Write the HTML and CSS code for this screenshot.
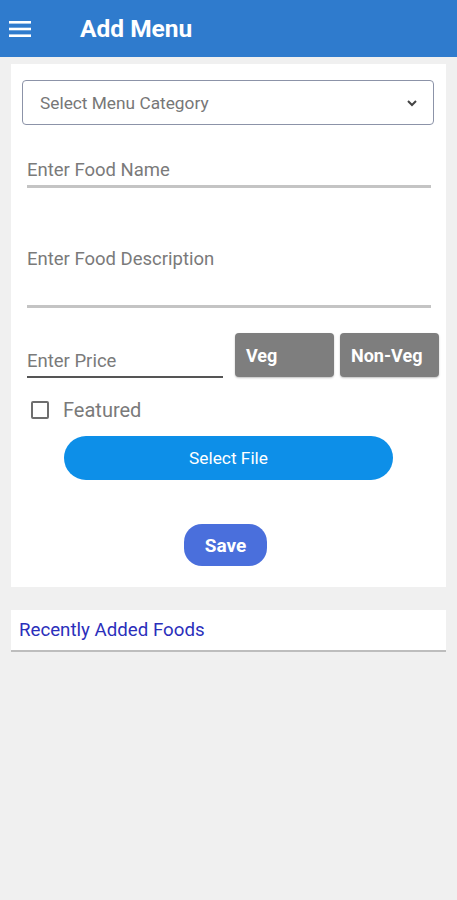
FILE: index.html
```html
<!DOCTYPE html>
<html lang="en">
<head>
    <meta charset="UTF-8">
    <meta name="viewport" content="width=device-width, initial-scale=1.0">
    <title>Add Menu</title>
    <link rel="stylesheet" href="styles.css">
</head>
<body>
    <div class="appbar">
        <svg class="menu-icon" width="22" height="16" viewBox="0 0 22 16">
            <rect x="0" y="0" width="22" height="2.6" fill="#fff"/>
            <rect x="0" y="6.7" width="22" height="2.6" fill="#fff"/>
            <rect x="0" y="13.4" width="22" height="2.6" fill="#fff"/>
        </svg>
        <h1>Add Menu</h1>
    </div>

    <div class="card">
        <div class="select-box">
            <span>Select Menu Category</span>
            <svg width="12" height="8" viewBox="0 0 12 8"><path d="M2 2 L6 6 L10 2" stroke="#444" stroke-width="2" fill="none"/></svg>
        </div>

        <div class="field name-field">Enter Food Name</div>
        <div class="field desc-field">Enter Food Description</div>

        <div class="price-row">
            <div class="field price-field">Enter Price</div>
            <div class="tag-btn veg">Veg</div>
            <div class="tag-btn">Non-Veg</div>
        </div>

        <label class="check-row">
            <span class="check-box"></span>
            <span>Featured</span>
        </label>

        <div class="file-btn">Select File</div>
        <div class="save-row"><div class="save-btn">Save</div></div>
    </div>

    <div class="recent">Recently Added Foods</div>
</body>
</html>
```

FILE: styles.css
```css
body { margin: 0; background: #f0f0f0; font-family: Roboto, "Liberation Sans", sans-serif; }
.appbar { height: 57px; background: #2f7bcd; display: flex; align-items: center; padding-left: 9px; }
.appbar .menu-icon { display: block; }
.appbar h1 { margin: 0 0 0 49px; color: #fff; font-size: 24.5px; font-weight: bold; }
.card { background: #fff; margin: 7px 11px 0 11px; padding: 16px 12px 21px 11px; }
.select-box { height: 43px; border: 1px solid #8c93a8; border-radius: 4px; display: flex; align-items: center; justify-content: space-between; padding: 0 15px 0 17px; color: #777; font-size: 17.3px; }
.field { color: #7a7a7a; font-size: 18.5px; margin-left: 5px; margin-right: 3px; }
.name-field { margin-top: 34px; padding-bottom: 4px; border-bottom: 3px solid #c4c4c4; }
.desc-field { margin-top: 60px; padding-bottom: 35px; border-bottom: 3px solid #c4c4c4; }
.price-row { display: flex; align-items: flex-end; margin-top: 25px; }
.price-field { width: 196px; flex-shrink: 0; margin-right: 0; padding-bottom: 4px; border-bottom: 2px solid #555; }
.tag-btn { flex-shrink: 0; height: 44px; box-sizing: border-box; background: #7e7e7e; color: #fff; font-weight: bold; font-size: 18px; border-radius: 4px; display: flex; align-items: center; padding: 0 11px; margin-left: 6px; margin-bottom: 1px; width: 99px; box-shadow: 0 1px 2px rgba(0,0,0,0.25); }
.tag-btn.veg { margin-left: 12px; }
.check-row { display: flex; align-items: center; margin-top: 20px; margin-left: 9px; color: #7a7a7a; font-size: 20px; }
.check-box { width: 14px; height: 14px; border: 2px solid #6e6e6e; border-radius: 2px; margin-right: 14px; }
.file-btn { margin: 14px 41px 0 42px; height: 44px; background: #0d8fe8; border-radius: 22px; color: #fff; font-size: 17.3px; display: flex; align-items: center; justify-content: center; }
.save-row { display: flex; justify-content: center; margin-top: 44px; padding-right: 5px; }
.save-btn { width: 83px; height: 42px; background: #4a6fdc; border-radius: 18px; color: #fff; font-weight: bold; font-size: 19px; display: flex; align-items: center; justify-content: center; }
.recent { background: #fff; margin: 23px 11px 0 11px; padding: 0 8px; height: 40px; display: flex; align-items: center; color: #2b2fbb; font-size: 18.7px; border-bottom: 2px solid #bdbdbd; }
```
